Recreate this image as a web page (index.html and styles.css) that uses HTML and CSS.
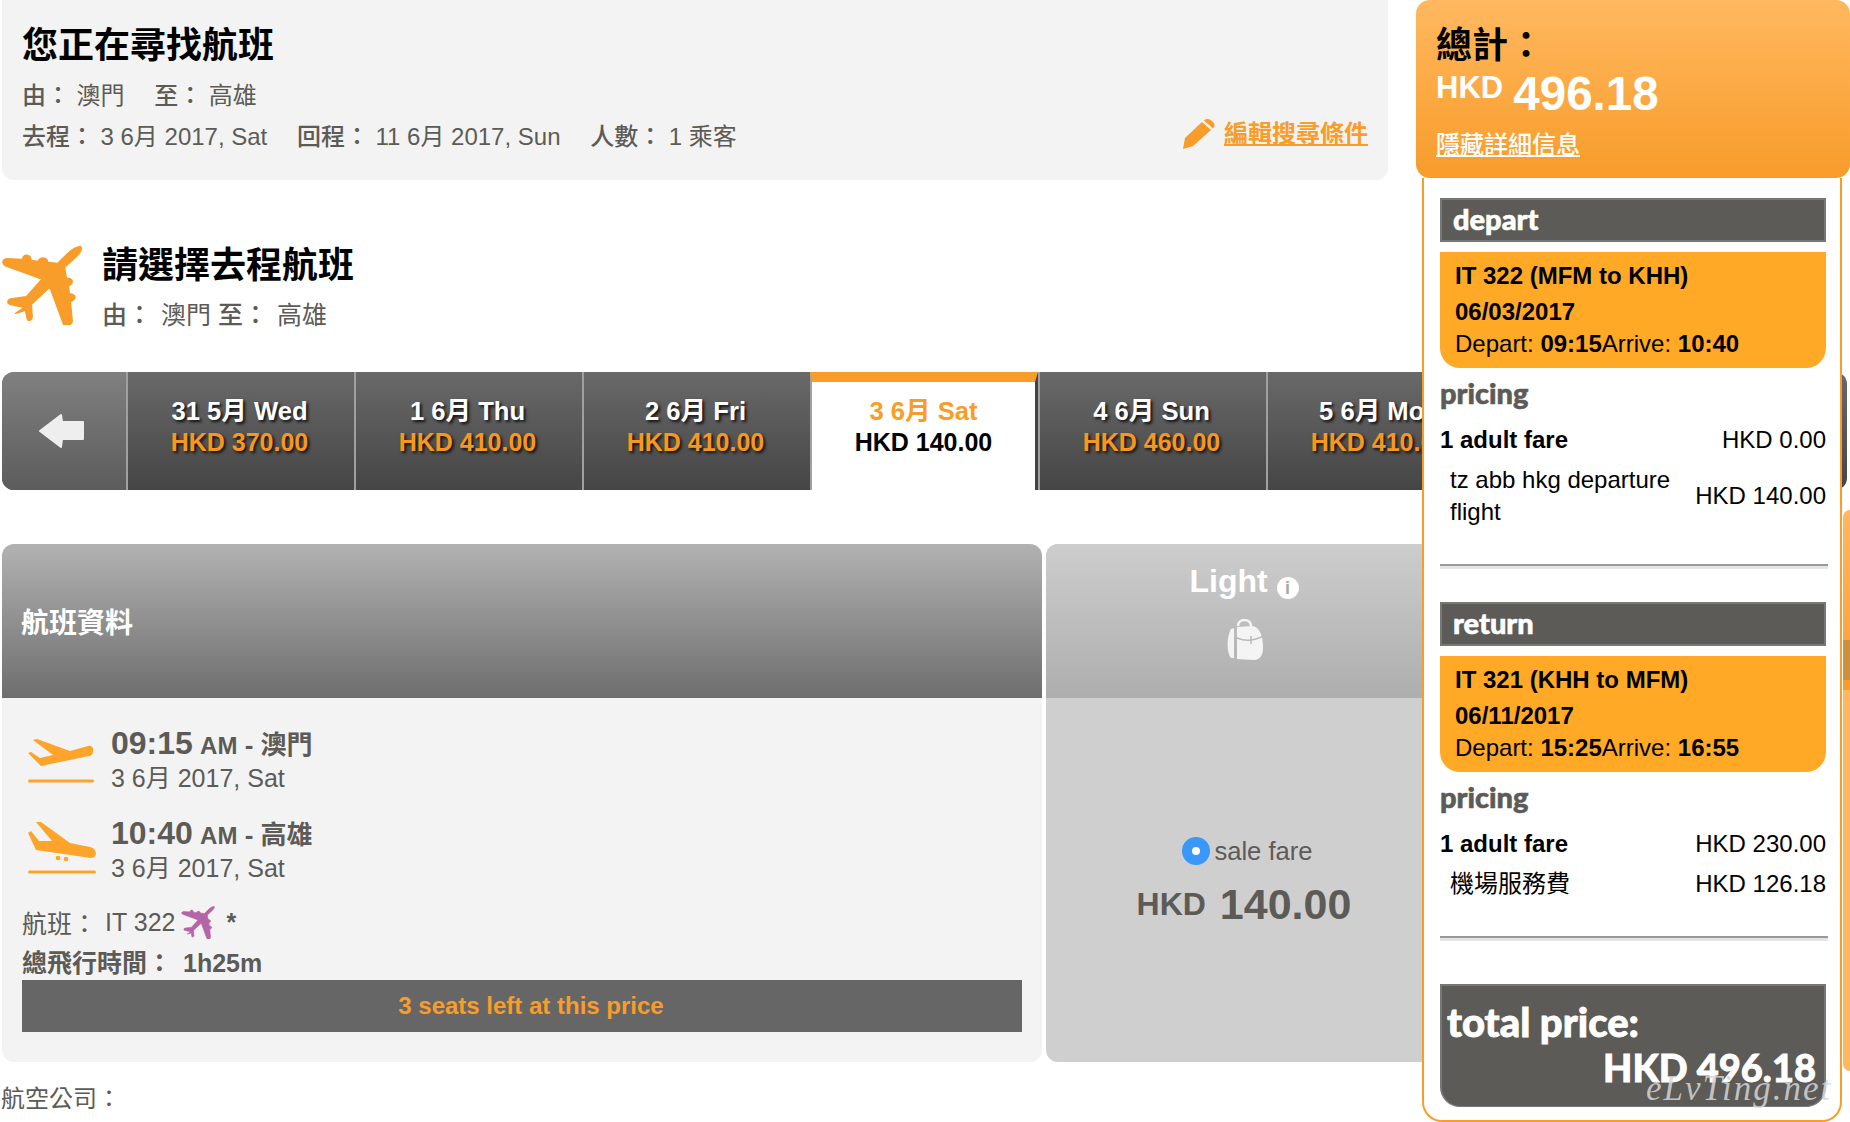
FILE: index.html
```html
<!DOCTYPE html>
<html lang="zh-Hant">
<head>
    <meta charset="UTF-8">
    <meta name="viewport" content="width=device-width, initial-scale=1.0">
    <title>請選擇去程航班</title>
    <link rel="stylesheet" href="styles.css">
</head>
<body>
    <svg class="icon-defs" aria-hidden="true">
        <symbol id="plane" viewBox="0 12 84 84">
            <path d="M82 16 C76 15 70 21 58 33 L48 32 C47 26 40 26 38 31 L31 30 C30 23 23 23 22 29 L6 28 C1 29 1 33 4 35 L42 49 L26 67 L11 69 C6 70 6 74 10 75 L24 78 L15 84 L25 81 L27 90 C28 92 31 92 32 88 L31 75 L50 57 L64 95 C66 98 72 97 73 92 L71 72 C77 70 78 65 70 64 L69 56 C75 53 74 48 67 48 L65 37 C74 28 84 22 82 16 Z"/>
        </symbol>
    </svg>

    <div class="page">
        <div class="search-box">
            <h1 class="title">您正在尋找航班</h1>
            <div class="search-line route-line">
                <span class="label">由：</span><span class="value wide">澳門</span>
                <span class="label">至：</span><span class="value">高雄</span>
            </div>
            <div class="search-line date-line">
                <div>
                    <span class="label">去程：</span><span class="value wide">3 6月 2017, Sat</span>
                    <span class="label">回程：</span><span class="value wide">11 6月 2017, Sun</span>
                    <span class="label">人數：</span><span class="value">1 乘客</span>
                </div>
                <a class="edit-link" href="#">
                    <svg class="pencil" viewBox="0 0 32 30">
                        <path d="M0 30 L2 19 L19 3 L28 11 L10 27 Z" fill="#f89c2a"/>
                        <path d="M21 1.5 C24 -1 27 0 30 3 C32 5 32 7 30 9.5 Z" fill="#f89c2a"/>
                    </svg>
                    <span>編輯搜尋條件</span>
                </a>
            </div>
        </div>

        <div class="section-head">
            <svg class="section-plane"><use href="#plane"/></svg>
            <div>
                <h2 class="title">請選擇去程航班</h2>
                <div class="section-route"><span class="label">由：</span><span class="value">澳門</span> <span class="label">至：</span><span class="value">高雄</span></div>
            </div>
        </div>

        <div class="tabbar">
            <div class="tab-arrow">
                <svg width="48" height="36" viewBox="0 0 48 36">
                    <path d="M2 18 L23 2 L24 9 L45 9 L45 26 L24 26 L23 34 Z" fill="#eee" stroke="#eee" stroke-width="2" stroke-linejoin="round"/>
                </svg>
            </div>
            <div class="tab"><div class="tab-date">31 5月 Wed</div><div class="tab-price">HKD 370.00</div></div>
            <div class="tab"><div class="tab-date">1 6月 Thu</div><div class="tab-price">HKD 410.00</div></div>
            <div class="tab"><div class="tab-date">2 6月 Fri</div><div class="tab-price">HKD 410.00</div></div>
            <div class="tab active"><div class="tab-date">3 6月 Sat</div><div class="tab-price">HKD 140.00</div></div>
            <div class="tab"><div class="tab-date">4 6月 Sun</div><div class="tab-price">HKD 460.00</div></div>
            <div class="tab"><div class="tab-date">5 6月 Mon</div><div class="tab-price">HKD 410.00</div></div>
        </div>

        <div class="results">
            <div class="info-col">
                <div class="info-head">航班資料</div>
                <div class="info-body">
                    <div class="stop">
                        <svg class="stop-icon" viewBox="2 0 80 60">
                            <path d="M13 15 L17 14 L50 26 L68 21 C72 20 74 23 73 27 C73 29 71 31 69 31 L21 41 L8 28 L11 27 L20 33 L33 30 Z"/>
                            <rect x="8" y="54.5" width="66" height="3" rx="1.5"/>
                        </svg>
                        <div>
                            <div class="stop-time"><b>09:15</b> <span class="ampm">AM</span> - 澳門</div>
                            <div class="stop-date">3 6月 2017, Sat</div>
                        </div>
                    </div>
                    <div class="stop">
                        <svg class="stop-icon" viewBox="2 0 80 60">
                            <path d="M16 7 L21 7 L50 28 L70 32 C74 33 76 36 76 39 C75 42 73 43 71 43 L16 35 L8 18 L11 16 L19 26 L32 26 Z"/>
                            <circle cx="38" cy="43" r="2.3"/>
                            <circle cx="46" cy="44" r="2.3"/>
                            <rect x="8" y="55.5" width="68" height="3" rx="1.5"/>
                        </svg>
                        <div>
                            <div class="stop-time"><b>10:40</b> <span class="ampm">AM</span> - 高雄</div>
                            <div class="stop-date">3 6月 2017, Sat</div>
                        </div>
                    </div>
                    <div class="flight-no">
                        <span>航班：</span><span class="flight-code">IT 322</span>
                        <svg class="mini-plane"><use href="#plane"/></svg>
                        <span class="star">*</span>
                    </div>
                    <div class="duration">總飛行時間：<span class="duration-val">1h25m</span></div>
                    <div class="seats-left">3 seats left at this price</div>
                </div>
            </div>

            <div class="fare-col">
                <div class="fare-head">
                    <div class="fare-name">Light <span class="info-dot">i</span></div>
                    <svg class="backpack" viewBox="0 0 37 42">
                        <path d="M12 8 C12 0 25 0 25 8" fill="none" stroke="#f4f4f4" stroke-width="2.5"/>
                        <path d="M5 11 L8 10 L8 40 L5 40 C1 36 0 20 5 11 Z" fill="#f4f4f4"/>
                        <path d="M11 9 L27 8 C34 10 37 18 37 30 C37 37 34 42 28 42 L11 41 Z" fill="#f4f4f4"/>
                        <path d="M11 20 C16 22 20 23 25 22 C30 21 34 20 37 18 M25 18 L25 26" fill="none" stroke="#b9b9b9" stroke-width="1.5"/>
                    </svg>
                </div>
                <div class="fare-body">
                    <div class="fare-option"><span class="radio"></span>sale fare</div>
                    <div class="fare-price"><span class="fare-cur">HKD</span> 140.00</div>
                </div>
            </div>
            <div class="fare-col"></div>
            <div class="fare-col featured"></div>
        </div>

        <div class="airline">航空公司：</div>
    </div>

    <aside class="summary">
        <div class="summary-head">
            <div class="summary-title">總計：</div>
            <div class="summary-total"><span class="summary-cur">HKD</span> 496.18</div>
            <a class="summary-link" href="#">隱藏詳細信息</a>
        </div>
        <div class="summary-body">
            <div class="leg-title">depart</div>
            <div class="leg-card">
                <div class="leg-flight">IT 322 (MFM to KHH)</div>
                <div class="leg-date">06/03/2017</div>
                <div class="leg-times">Depart: <b>09:15</b>Arrive: <b>10:40</b></div>
            </div>
            <div class="pricing-title">pricing</div>
            <div class="price-row main"><b>1 adult fare</b><span>HKD 0.00</span></div>
            <div class="price-row sub"><span class="price-name">tz abb hkg departure flight</span><span>HKD 140.00</span></div>
            <div class="divider"></div>

            <div class="leg-title">return</div>
            <div class="leg-card">
                <div class="leg-flight">IT 321 (KHH to MFM)</div>
                <div class="leg-date">06/11/2017</div>
                <div class="leg-times">Depart: <b>15:25</b>Arrive: <b>16:55</b></div>
            </div>
            <div class="pricing-title">pricing</div>
            <div class="price-row main"><b>1 adult fare</b><span>HKD 230.00</span></div>
            <div class="price-row sub"><span class="price-name">機場服務費</span><span>HKD 126.18</span></div>
            <div class="divider last"></div>

            <div class="total-box">
                <div class="total-label">total price:</div>
                <div class="total-amount">HKD 496.18</div>
            </div>
        </div>
        <div class="watermark">eLvTing.net</div>
    </aside>
</body>
</html>
```

FILE: styles.css
```css
html, body {
    height: 1122px;
    overflow: hidden;
}
body {
    margin: 0;
    position: relative;
    background: #fff;
    color: #5c5b57;
    font-family: "Liberation Sans", "Noto Sans CJK TC", sans-serif;
    font-size: 24px;
}
a {
    text-decoration: underline;
}
b {
    font-weight: bold;
}
.icon-defs {
    display: none;
}
.page {
    padding-left: 2px;
}

/* search summary */
.search-box {
    box-sizing: border-box;
    width: 1386px;
    height: 180px;
    padding: 27px 20px 0;
    background: #f3f3f3;
    border-radius: 0 0 12px 12px;
}
.title {
    margin: 0;
    color: #000;
    font-size: 36px;
    line-height: 38px;
    font-weight: bold;
}
.search-line {
    line-height: 30px;
}
.route-line {
    margin-top: 16px;
}
.date-line {
    margin-top: 11px;
    display: flex;
    justify-content: space-between;
    align-items: center;
}
.label {
    font-weight: 500;
    margin-right: 6.5px;
}
.value.wide {
    margin-right: 23px;
}
.edit-link {
    display: flex;
    align-items: center;
    gap: 9px;
    color: #f89c2a;
    font-weight: bold;
    position: relative;
    top: -3px;
}
.edit-link span {
    text-decoration: underline;
}
.pencil {
    width: 32px;
    height: 30px;
}

/* heading above the date tabs */
.section-head {
    margin-top: 60px;
    height: 100px;
    display: flex;
    gap: 19px;
}
.section-plane {
    width: 82px;
    height: 82px;
    margin: 3px 0 0 -1px;
    fill: #f89c2a;
    stroke: #f89c2a;
    stroke-width: 1.5;
    stroke-linejoin: round;
}
.section-head .title {
    padding-top: 6px;
    line-height: 40px;
}
.section-route {
    margin-top: 14px;
    font-size: 25px;
    line-height: 30px;
}
.section-route .label {
    margin-right: 9px;
}

/* date tabs */
.tabbar {
    margin-top: 32px;
    width: 1845px;
    height: 118px;
    display: flex;
    overflow: hidden;
    border-radius: 12px;
    background: linear-gradient(#696969, #454545);
}
.tab-arrow {
    flex: none;
    box-sizing: border-box;
    width: 124px;
    height: 118px;
    padding-right: 5px;
    display: flex;
    align-items: center;
    justify-content: center;
    background: linear-gradient(#808080, #5c5c5c);
}
.tab {
    flex: none;
    box-sizing: border-box;
    width: 228px;
    height: 118px;
    padding: 24px 3px 0 0;
    border-left: 2px solid #a0a0a0;
    text-align: center;
    color: #fff;
    font-size: 25px;
    font-weight: bold;
    text-shadow: 2px 2px 3px #111;
    background: linear-gradient(#696969, #454545);
}
.tab-date {
    font-size: 25.6px;
    line-height: 30px;
}
.tab-price {
    color: #f8971f;
    line-height: 33px;
}
.tab.active {
    padding: 14px 0 0 0;
    border-top: 10px solid #f89c2a;
    border-right: 3px solid #444;
    background: #fff;
    color: #f89c2a;
    text-shadow: none;
}
.tab.active .tab-price {
    color: #000;
}

/* flight row */
.results {
    margin-top: 54px;
    display: grid;
    grid-template-columns: 1040px 396px 393px 7px;
    gap: 4px;
    align-items: start;
}
.info-col {
    height: 518px;
    border-radius: 12px;
    background: #f3f3f3;
}
.info-head {
    box-sizing: border-box;
    height: 154px;
    padding-left: 19px;
    display: flex;
    align-items: center;
    color: #fff;
    font-size: 28px;
    font-weight: bold;
    border-radius: 12px 12px 0 0;
    background: linear-gradient(#b2b2b2, #6e6e6e);
}
.info-body {
    padding: 27px 20px 0;
}
.stop {
    display: flex;
    gap: 9px;
    height: 68px;
    margin-bottom: 22px;
}
.stop-icon {
    width: 80px;
    height: 60px;
    fill: #ffa42b;
}
.stop-time {
    font-size: 26px;
    font-weight: bold;
    line-height: 36px;
}
.stop-time b {
    font-size: 32px;
}
.ampm {
    font-size: 24px;
}
.stop-date {
    margin-top: -2px;
    font-size: 25px;
    line-height: 32px;
}
.flight-no {
    margin-top: -1px;
    height: 36px;
    display: flex;
    align-items: center;
    font-size: 25px;
}
.flight-code {
    margin-left: 8px;
}
.mini-plane {
    width: 34px;
    height: 34px;
    margin-left: 6px;
    fill: #b565a7;
    stroke: #b565a7;
    stroke-width: 1.5;
    stroke-linejoin: round;
}
.star {
    margin-left: 11px;
    font-weight: bold;
}
.duration {
    margin-top: 6px;
    font-size: 25px;
    font-weight: bold;
    line-height: 34px;
}
.duration-val {
    margin-left: 11px;
}
.seats-left {
    height: 52px;
    padding-left: 18px;
    box-sizing: border-box;
    background: #666;
    color: #f89c2a;
    font-size: 24px;
    font-weight: bold;
    line-height: 52px;
    text-align: center;
}

/* fare columns */
.fare-col {
    height: 518px;
    border-radius: 12px;
    background: #cfcfcf;
}
.fare-head {
    box-sizing: border-box;
    height: 154px;
    padding-top: 18px;
    text-align: center;
    color: #fff;
    border-radius: 12px 12px 0 0;
    background: linear-gradient(#cdcdcd, #aeaeae);
}
.fare-name {
    font-size: 32px;
    font-weight: bold;
    line-height: 38px;
}
.info-dot {
    display: inline-block;
    width: 22px;
    height: 22px;
    border-radius: 50%;
    background: #fff;
    color: #a8a8a8;
    font-size: 18px;
    line-height: 22px;
    vertical-align: -2px;
}
.backpack {
    display: block;
    width: 37px;
    height: 42px;
    margin: 18px auto 0;
}
.fare-body {
    padding-top: 137px;
    text-align: center;
}
.fare-option {
    display: flex;
    justify-content: center;
    align-items: center;
    gap: 4px;
    height: 32px;
    padding-left: 7px;
    font-size: 25.6px;
}
.radio {
    box-sizing: border-box;
    width: 28px;
    height: 28px;
    border: 10px solid #3a97fb;
    border-radius: 50%;
    background: #fff;
}
.fare-price {
    margin-top: 12px;
    font-size: 43px;
    font-weight: bold;
    line-height: 50px;
}
.fare-cur {
    font-size: 32px;
    margin-right: 2px;
    vertical-align: 4px;
}
.fare-col.featured {
    margin-top: -34px;
    height: 561px;
    border-radius: 14px 0 0 14px;
    background: linear-gradient(#ffb85f, #fba53f 130px, #cc9040 130px, #cc9040 170px, #f89c2a 170px, #f89c2a 180px, #ffb85f 180px);
}
.airline {
    margin: 13px 0 0 -1px;
    font-size: 24px;
    line-height: 30px;
}

/* price summary, sits over the page */
.summary {
    position: absolute;
    top: 0;
    right: 0;
    width: 434px;
    color: #000;
}
.summary-head {
    box-sizing: border-box;
    height: 178px;
    padding: 27px 20px 0;
    border-radius: 14px;
    background: linear-gradient(#ffb85f, #f89c2a);
    position: relative;
}
.summary-title {
    font-size: 36px;
    font-weight: bold;
    line-height: 38px;
}
.summary-total {
    margin-top: -2px;
    color: #fff;
    font-size: 47.5px;
    font-weight: bold;
    line-height: 50px;
}
.summary-cur {
    margin-right: -3px;
    font-size: 31px;
    vertical-align: 12px;
}
.summary-link {
    display: block;
    margin-top: 11px;
    color: #fff;
    font-weight: 500;
    line-height: 30px;
}
.summary-body {
    box-sizing: border-box;
    width: 420px;
    height: 944px;
    margin-left: 6px;
    padding: 20px 14px 0 16px;
    background: #fff;
    border: 2px solid #f89c2a;
    border-top: none;
    border-radius: 0 0 20px 20px;
}
.leg-title {
    box-sizing: border-box;
    height: 44px;
    padding-left: 11px;
    border: 2px solid #777;
    background: #5c5b57;
    color: #fff;
    font-family: Lato, "Liberation Sans", sans-serif;
    font-size: 29px;
    font-weight: 900;
    line-height: 38px;
    -webkit-text-stroke: 0.6px #fff;
}
.leg-card {
    box-sizing: border-box;
    height: 116px;
    margin-top: 10px;
    padding: 7px 15px 0;
    border-radius: 0 0 20px 20px;
    background: #ffa927;
}
.leg-flight {
    font-weight: bold;
    line-height: 34px;
}
.leg-date {
    font-weight: bold;
    line-height: 37px;
}
.leg-times {
    line-height: 28px;
}
.pricing-title {
    margin-top: 7px;
    color: #5c5b57;
    font-family: Lato, "Liberation Sans", sans-serif;
    font-size: 29px;
    font-weight: 900;
    line-height: 36px;
    -webkit-text-stroke: 0.6px #5c5b57;
}
.price-row {
    display: flex;
    justify-content: space-between;
    align-items: center;
    line-height: 32px;
}
.price-row.main {
    margin-top: 13px;
}
.price-row.sub {
    margin-top: 8px;
    padding-left: 10px;
}
.price-name {
    width: 240px;
}
.divider {
    height: 3px;
    margin: 36px -2px 33px 0;
    border-top: 2px solid #999;
    background: #e4e4e4;
}
.divider.last {
    margin-bottom: 43px;
}
.total-box {
    box-sizing: border-box;
    height: 123px;
    padding: 14px 8px 0 5px;
    border: 2px solid #777;
    border-bottom-width: 1px;
    border-radius: 0 0 20px 20px;
    background: #5c5b57;
    color: #fff;
    font-family: Lato, "Liberation Sans", sans-serif;
    font-weight: 900;
    -webkit-text-stroke: 0.8px #fff;
}
.total-label {
    font-size: 40px;
    line-height: 44px;
}
.total-amount {
    font-size: 38px;
    text-align: right;
    line-height: 47px;
}
.watermark {
    position: absolute;
    top: 1067px;
    left: 230px;
    color: rgba(214, 214, 214, 0.85);
    font-family: "Liberation Serif", serif;
    font-size: 35px;
    font-style: italic;
    letter-spacing: 2px;
    line-height: 44px;
}
```
